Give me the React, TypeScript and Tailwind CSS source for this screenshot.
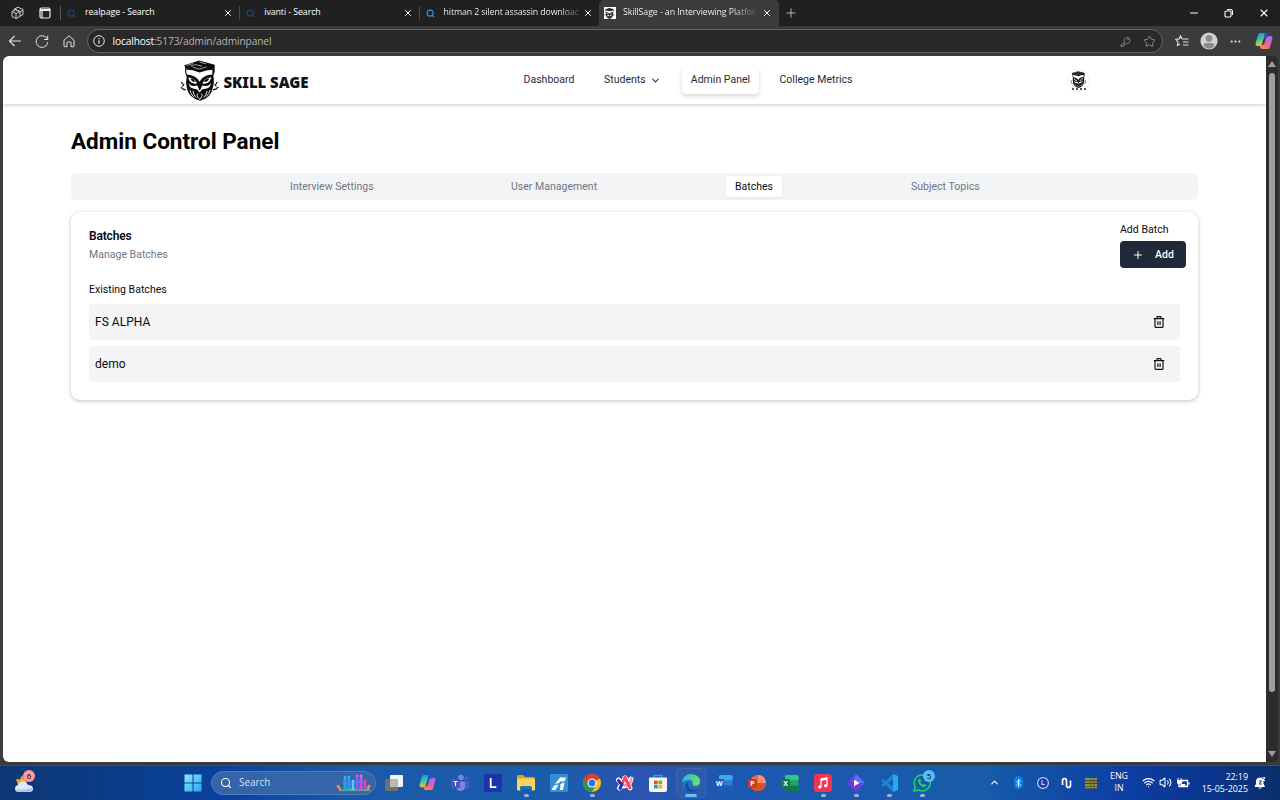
import React from "react";
import {
  ChevronDown,
  ChevronUp,
  Plus,
  Search,
  X,
  Minus,
  Star,
  Wifi,
  Volume2,
  Bluetooth,
  Ellipsis,
} from "lucide-react";

const Owl = ({ className }: { className: string }) => (
  <svg viewBox="12 10 120 122" className={className}>
    <path d="M25 25 70 11l46 13v21l-4 12q4 20-2 37-3 27-38 38-33-9-39-36-5-19-1-37-7-14-4-25Z" fill="#0b0b0b" />
    <path d="M32 26 52 20M50 31l20 6 22-7M70 15l20 6M44 28l14-5 20 5" stroke="#fff" strokeWidth="1.800" fill="none" />
    <path d="M31 38q18 0 40 9 21-7 38-8v14q-28 1-38 22Q61 56 33 53q-4-8-2-15Z" fill="#fff" />
    <path d="M37 62q18 2 26 17-6 3-9 1-14-2-17-18ZM106 61q-18 2-27 18 5 3 9 1 14-2 18-19Z" fill="#fff" />
    <path d="M43 65q10 0 15 10-11 1-15-10ZM100 65q-11 0-16 10 12 1 16-10Z" fill="#0b0b0b" />
    <path d="M38 78q5 12 20 9l6-1 7 16 8-16 5 1q15 3 21-10-1 17-17 19l-10 2-7 9-7-9-10-2Q39 94 38 78Z" fill="#fff" />
    <path d="M64 81h15l-8 17Z" fill="#0b0b0b" />
    <path d="M42 100q2 12 11 20M51 102q1 12 9 20M93 102q-1 12-9 20M102 99q-2 12-11 20M66 110l-3 7 8 11 8-11-3-7" stroke="#fff" strokeWidth="2.600" fill="none" />
    <path d="M17 75l2 7M24 81l-5 8M14 92l7 3M29 99l-10-3M123 75l-2 7M116 81l5 8M128 91l-8 4M111 99l11-3" stroke="#0b0b0b" strokeWidth="3.600" fill="none" />
  </svg>
);

const Copilot = ({ className }: { className: string }) => (
  <svg viewBox="0 0 18 18" className={className}>
    <defs>
      <linearGradient id="cpa" x1="0" y1="0" x2="0.3" y2="1">
        <stop offset="0" stopColor="#2387ea" />
        <stop offset=".5" stopColor="#35c5a3" />
        <stop offset="1" stopColor="#f5c62e" />
      </linearGradient>
      <linearGradient id="cpb" x1="0.6" y1="0" x2="0.2" y2="1">
        <stop offset="0" stopColor="#a66bf0" />
        <stop offset=".55" stopColor="#ee62a0" />
        <stop offset="1" stopColor="#ff8a45" />
      </linearGradient>
    </defs>
    <path d="M5 1h6q1.500 0 2 2l.6 2H11Q9 5 8.400 7L7 12q-.6 2-2.500 2H2.500Q0 14 .7 11L3 3Q3.600 1 5 1Z" fill="url(#cpa)" />
    <path d="M13 17H7q-1.500 0-2-2l-.5-2H7q2 0 2.600-2L11 6q.6-2 2.500-2h2q2.500 0 1.800 3L15 15q-.6 2-2 2Z" fill="url(#cpb)" />
    <path d="M9.500 1H11q1.500 0 2 2l.6 2H11Q9.800 5 9.200 5.800Z" fill="#1d4fc7" />
  </svg>
);

const Trash = () => (
  <svg viewBox="0 0 12 12" className="size-3" fill="none" stroke="#111" strokeWidth="1.200">
    <path d="M.8 2.700h10.400M4 2.500V1.300q0-.6.600-.6h2.800q.6 0 .6.600v1.200M2 2.700v7.700q0 .9.900.9h6.200q.9 0 .9-.9V2.700M4.900 5.200v3.800M7.100 5.200v3.800" />
  </svg>
);

const tabs = ["realpage - Search", "ivanti - Search", "hitman 2 silent assassin downloac"];

function TabStrip() {
  return (
    <div className="flex h-[26px] shrink-0 items-center bg-[#202020] text-white">
      <div className="flex w-[61px] shrink-0 items-center justify-between border-r border-[#5a5a5a] pr-[9px] pl-[11px]">
        <svg viewBox="0 0 14 14" className="size-[14px]" fill="none" stroke="#ccc" strokeWidth="1">
          <path d="M1 5.500 5 3.500l4 2v5l-4 2-4-2ZM1 5.500l4 2 4-2M5 7.500v5M3 4.500V3.200l4-2 5 2.300v5L9 10.300M4 3.500l5 2.300 3-2" />
        </svg>
        <svg viewBox="0 0 12 12" className="size-[12px]" fill="none" stroke="#eee" strokeWidth="1.200">
          <rect x="1" y="1" width="10" height="10" rx="1.500" />
          <path d="M1 2.500h10M1 3.500h10M3 3v8" />
        </svg>
      </div>
      {tabs.map((t, i) => (
        <div
          key={t}
          className={
            "flex w-[179.300px] shrink-0 items-center pr-[6px] pl-[6px] " + (i < 2 ? "border-r border-[#4a4a4a]" : "")
          }
        >
          <Search className={"size-[9px] shrink-0 " + (i === 2 ? "text-[#3b8de0]" : "text-[#1d4870]")} strokeWidth={3} />
          <span
            className={
              "ml-[9px] w-[136px] text-[8.800px] whitespace-nowrap " +
              (i === 2
                ? "bg-linear-to-r from-white from-85% to-[#444] bg-clip-text tracking-[-0.120px] text-transparent"
                : "tracking-[-0.080px]")
            }
          >
            {t}
          </span>
          <X className="ml-auto size-[10px] shrink-0" strokeWidth={2.400} />
        </div>
      ))}
      <div className="flex h-full w-[180px] shrink-0 items-center rounded-t-[5px] bg-[#3b3b3b] pr-[7px] pl-[5px]">
        <div className="flex size-3 items-center justify-center bg-white">
          <Owl className="size-[11px]" />
        </div>
        <span className="ml-[7px] w-[135px] bg-linear-to-r from-white from-80% to-[#555] bg-clip-text text-[8.800px] tracking-[-0.080px] whitespace-nowrap text-transparent">
          SkillSage - an Interviewing Platfor
        </span>
        <X className="ml-auto size-[10px] shrink-0" strokeWidth={2.400} />
      </div>
      <Plus className="ml-[5px] size-[14px] text-[#c8c8c8]" strokeWidth={1.500} />
      <div className="ml-auto flex w-[97px] items-center justify-between pr-[10px] pl-[5px]">
        <Minus className="size-3" strokeWidth={2} />
        <svg viewBox="0 0 10 10" className="size-[10px]" fill="none" stroke="#fff" strokeWidth="1.100">
          <rect x="1" y="3" width="6" height="6" rx="1.200" />
          <path d="M3 1.500h3.500q2 0 2 2V7" />
        </svg>
        <X className="size-3" strokeWidth={2.200} />
      </div>
    </div>
  );
}

function Toolbar() {
  return (
    <div className="flex h-[30px] shrink-0 items-center bg-[#3b3b3b] pr-[7px] pl-2 text-[#e4e4e4]">
      <svg viewBox="0 0 14 14" className="size-[14px]" fill="none" stroke="currentColor" strokeWidth="1.100">
        <path d="M13 7H1.500M6.500 2l-5 5 5 5" />
      </svg>
      <svg viewBox="0 0 14 14" className="ml-[13px] size-[14px]" fill="none" stroke="currentColor" strokeWidth="1">
        <path d="M12.600 6A5.800 5.800 0 1 0 12.800 8M12.700 1.500V5.500H9" />
      </svg>
      <svg viewBox="0 0 14 14" className="ml-[13px] size-[14px]" fill="none" stroke="currentColor" strokeWidth="1">
        <path d="M2 6.200 7 1.800l5 4.400V12q0 .7-.7.700H9V8.500Q9 8 8.500 8h-3Q5 8 5 8.500v4.200H2.700Q2 12.700 2 12Z" />
      </svg>
      <div className="ml-[11px] flex h-[24px] w-[1076px] items-center rounded-full border border-[#666] bg-[#282828] pr-[6px] pl-[5px]">
        <svg viewBox="0 0 12 12" className="size-[12px]" fill="none" stroke="currentColor">
          <circle cx="6" cy="6" r="5.300" />
          <path d="M6 5.200v3.600M6 3v1.200" strokeWidth="1.200" />
        </svg>
        <span className="ml-[7.500px] pt-px text-[10.200px] tracking-[-0.130px] text-[#b4b4b4]">
          <span className="text-white">localhost</span>:5173/admin/adminpanel
        </span>
        <svg viewBox="0 0 12 12" className="ml-auto size-[11px]" fill="none" stroke="#8a8a8a">
          <path d="M5.200 6.600a3.200 3.200 0 1 1 1.500 1.200L6 8.500H5V10H3.500v1.300H1V9.800Z" />
          <circle cx="8.800" cy="3.400" r=".6" />
        </svg>
        <Star className="ml-[12px] size-[13px] text-[#999]" strokeWidth={1.600} />
      </div>
      <svg viewBox="0 0 14 12" className="ml-[12px] h-[12px] w-[14px]" fill="none" stroke="currentColor" strokeWidth="1.100">
        <path d="M8 4 7 3.700 5.500.8 4 3.900l-3.400.5L3 6.900l-.6 3.600 2.600-1.500M8 4h5.500M8 7h5.500M8 10h5.500" />
      </svg>
      <svg viewBox="0 0 18 18" className="ml-[10.500px] size-[18px]">
        <circle cx="9" cy="9" r="8.600" fill="#d4d2d0" />
        <circle cx="9" cy="6.500" r="3.400" fill="#8d8a88" />
        <path d="M3.500 14q0-3 3-3h5q3 0 3 3-5.500 5.500-11 0Z" fill="#8d8a88" />
      </svg>
      <Ellipsis className="ml-[11px] size-[13px]" />
      <Copilot className="ml-auto size-[18px]" />
    </div>
  );
}

function BatchRow({ name }: { name: string }) {
  return (
    <div className="flex h-9 items-center justify-between rounded-[3px] bg-[#f3f4f6] pr-[15px] pl-[6px] text-[12px]">
      <span className="tracking-[0.030px]">{name}</span>
      <Trash />
    </div>
  );
}

function Site() {
  return (
    <div className="flex h-[706px] w-[1263px] flex-col overflow-hidden rounded-l-[6px] bg-white font-['Roboto',sans-serif] text-[#090b10]">
      <header className="flex h-12 shrink-0 items-center pl-[177px] shadow-[0_1px_4px_rgba(0,0,0,0.22)]">
        <Owl className="h-[41px] w-[40px]" />
        <span className="ml-[3.500px] w-[86px] pt-[4px] font-['Noto_Sans',sans-serif] text-[15px] leading-none font-black tracking-[-0.050px] whitespace-nowrap text-[#101418]">
          SKILL SAGE
        </span>
        <nav className="ml-[214px] flex items-center text-[10.500px] font-normal tracking-[0.020px] text-[#1f2937]">
          <span className="w-[80.500px]">Dashboard</span>
          <span className="flex w-[78px] items-center">
            Students
            <ChevronDown className="ml-[4px] size-[11px]" strokeWidth={2.200} />
          </span>
          <span className="flex h-[27px] w-[77px] items-center justify-center rounded-[4px] bg-white shadow-[0_2px_4px_rgba(0,0,0,0.16)]">
            Admin Panel
          </span>
          <span className="ml-[20.500px]">College Metrics</span>
        </nav>
        <div className="ml-auto mr-[176px] flex size-[23px] items-center justify-center rounded-full border border-[#eef0f0]">
          <div className="flex flex-col items-center">
            <Owl className="size-[17px]" />
            <span className="h-[2px] w-[14px] border-b-2 border-dotted border-[#555]" />
          </div>
        </div>
      </header>
      <main className="pr-[68px] pl-[68px]">
        <h1 className="mt-[22px] h-[30px] text-[22.500px] leading-[30px] font-bold text-black">Admin Control Panel</h1>
        <div className="mt-[17px] flex h-[27px] items-center rounded-[5px] bg-[#f3f4f6] text-[10.500px] tracking-[0.020px] text-[#71757e]">
          <span className="ml-[219px] w-[221px]">Interview Settings</span>
          <span className="w-[215px]">User Management</span>
          <span className="flex h-[21px] w-[56px] items-center justify-center rounded-[3px] bg-white text-[#090b10] shadow-[0_1px_2px_rgba(0,0,0,0.08)]">
            Batches
          </span>
          <span className="ml-[129px]">Subject Topics</span>
        </div>
        <section className="mt-[12px] h-[188px] rounded-[9px] bg-white pt-[11px] pr-[18px] pl-[18px] shadow-[0_1px_4px_rgba(0,0,0,0.25)]">
          <div className="-mr-[6px] flex h-[46px] justify-between">
            <div className="pt-[4px]">
              <h2 className="text-[12px] leading-[18px] font-semibold tracking-[-0.180px]">Batches</h2>
              <p className="pt-px text-[10.500px] leading-[18px] tracking-[0.020px] text-[#71757e]">Manage Batches</p>
            </div>
            <div>
              <p className="text-[10.500px] leading-[14px] tracking-[0.020px]">Add Batch</p>
              <button className="mt-[4px] flex h-[27px] w-[66px] items-center rounded-[4px] bg-[#1f2937] pl-[12px] text-[10.500px] font-medium text-white">
                <Plus className="size-3" strokeWidth={2} />
                <span className="ml-[11px]">Add</span>
              </button>
            </div>
          </div>
          <p className="mt-[14px] mb-[7px] text-[10.500px] leading-[14px] tracking-[0.020px]">Existing Batches</p>
          <div className="flex flex-col gap-[6px]">
            <BatchRow name="FS ALPHA" />
            <BatchRow name="demo" />
          </div>
        </section>
      </main>
    </div>
  );
}

function ScrollBar() {
  return (
    <div className="flex h-[706px] w-[12px] flex-col items-center rounded-r-[5px] bg-[#2c2c2c] py-[5px]">
      <svg viewBox="0 0 8 6" className="h-[6px] w-[8px]">
        <path d="M4 0 8 6H0Z" fill="#9e9e9e" />
      </svg>
      <div className="mt-[6px] h-[619px] w-[6px] rounded-full bg-[#9e9e9e]" />
      <svg viewBox="0 0 8 6" className="mt-auto h-[6px] w-[8px]">
        <path d="M4 6 8 0H0Z" fill="#9e9e9e" />
      </svg>
    </div>
  );
}

const Office = ({ letter, main, dark, light }: { letter: string; main: string; dark: string; light: string }) => (
  <svg viewBox="0 0 18 18" className="size-[18px]">
    <rect x="4" y="1" width="13.500" height="16" rx="1.500" fill={main} />
    <rect x="4" y="1" width="13.500" height="5.300" rx="1.500" fill={light} />
    <path d="M4 11.500h13.500V16q0 1-1 1H5q-1 0-1-1Z" fill={dark} />
    <rect x="0" y="5" width="9" height="9" rx="1" fill={dark} />
    <text x="4.500" y="12" textAnchor="middle" fontSize="7" fontWeight="700" fill="#fff" fontFamily="Open Sans">
      {letter}
    </text>
  </svg>
);

const apps: { node: React.ReactNode; dot?: boolean; active?: boolean }[] = [
  {
    node: (
      <svg viewBox="0 0 18 18" className="size-[18px]">
        <rect x="5" y="1" width="13" height="12" rx="1" fill="#f4f4f4" />
        <rect x="0" y="5" width="13" height="12" rx="1" fill="#707070" />
        <path d="M5 5h8v8H5Z" fill="#b9b9b9" />
      </svg>
    ),
  },
  { node: <Copilot className="size-[17px]" /> },
  {
    node: (
      <svg viewBox="0 0 18 18" className="size-[18px]">
        <circle cx="10" cy="3.500" r="2.800" fill="#7b83eb" />
        <circle cx="15.500" cy="4.500" r="1.900" fill="#5059c9" />
        <path d="M12 7.500h6v4.500q0 3-3 3h-3Z" fill="#5059c9" />
        <path d="M5 7.500h9v4.500q0 5-4.500 5T5 12Z" fill="#7b83eb" />
        <rect x="0" y="5" width="9" height="9" rx="1" fill="#4b53bc" />
        <path d="M2.500 7.500h4M4.500 7.500v4.500" stroke="#fff" strokeWidth="1.100" />
      </svg>
    ),
  },
  {
    node: (
      <svg viewBox="0 0 18 18" className="size-[18px]">
        <rect width="18" height="18" fill="#1b34ab" />
        <path d="M6.700 4v9.200h5.600" stroke="#fff" strokeWidth="1.800" fill="none" />
      </svg>
    ),
  },
  {
    dot: true,
    node: (
      <svg viewBox="0 0 18 18" className="size-[18px]">
        <path d="M0 2.500Q0 1 1.500 1H6l2 2h8.500Q18 3 18 4.500V8H0Z" fill="#e4a31b" />
        <rect y="4.500" width="18" height="12" rx="1.200" fill="#ffd35b" />
        <path d="M3 17v-3.500q0-1.500 1.500-1.500h9q1.500 0 1.500 1.500V17Z" fill="#1477c8" />
        <path d="M5.500 17v-1.500h7V17Z" fill="#0b529c" />
      </svg>
    ),
  },
  {
    node: (
      <svg viewBox="0 0 18 18" className="size-[18px]">
        <rect width="18" height="18" rx="1" fill="#338fcf" />
        <path d="M1.500 16 4 11.500l4.500-1L5.500 16ZM5 10l5-6.500h6L15 7l-4 1 .5-2L9 9ZM10.500 10l4-1.500L13 16h-3Z" fill="#fff" />
      </svg>
    ),
  },
  {
    dot: true,
    node: (
      <svg viewBox="0 0 18 18" className="size-[18px]">
        <circle cx="9" cy="9" r="9" fill="#fbc116" />
        <path d="M9 9 1.200 4.500A9 9 0 0 1 16.800 4.500Z" fill="#e33b2e" />
        <path d="M9 9 1.200 4.500A9 9 0 0 0 9 18l4-7Z" fill="#269c4b" />
        <path d="M9 5h7.900A9 9 0 0 0 1.200 4.500L5 11Z" fill="#e33b2e" />
        <circle cx="9" cy="9" r="4.500" fill="#fff" />
        <circle cx="9" cy="9" r="3.400" fill="#2a74e8" />
      </svg>
    ),
  },
  {
    node: (
      <svg viewBox="0 0 18 16" className="h-[16px] w-[18px]" strokeLinecap="round" strokeLinejoin="round" fill="none">
        <path d="M9 3 6.500 9l-4-4M6 9l-2.500 4M9 3l5 10M15 4l-2 5-5 2" stroke="#fff" strokeWidth="5" />
        <path d="M2.500 5q2 5 9 5.500M15.500 3.500Q15 9 11 10.500" stroke="#ff8b9c" strokeWidth="2.600" />
        <path d="M9 2.500 14 13" stroke="#f84561" strokeWidth="3" />
        <path d="M9 2.500 4 13.500" stroke="#f84561" strokeWidth="2.800" />
        <path d="M2.500 5.500Q4 8.500 6 9.200L4 13.300" stroke="#2032b8" strokeWidth="2.800" />
      </svg>
    ),
  },
  {
    node: (
      <svg viewBox="0 0 18 18" className="size-[18px]">
        <path d="M5 4V1.500h8V4" stroke="#28a3e5" strokeWidth="1.400" fill="none" />
        <path d="M0 3.500h18V16q0 2-2 2H2q-2 0-2-2Z" fill="#f6f6f6" />
        <path d="M5 6.500h3.700v3.700H5Z" fill="#ef5023" />
        <path d="M9.400 6.500h3.700v3.700H9.400Z" fill="#7eb900" />
        <path d="M5 10.800h3.700v3.700H5Z" fill="#10a2e7" />
        <path d="M9.400 10.800h3.700v3.700H9.400Z" fill="#fcb800" />
      </svg>
    ),
  },
  {
    active: true,
    node: (
      <svg viewBox="0 0 18 18" className="size-[18px]">
        <defs>
          <linearGradient id="edg" x1="0" y1="0" x2="1" y2="0.400">
            <stop offset="0" stopColor="#28b1ea" />
            <stop offset="1" stopColor="#69dd6b" />
          </linearGradient>
        </defs>
        <circle cx="9" cy="9" r="9" fill="#1c74cf" />
        <path d="M.1 8.500Q1 0 9 0q9 .5 9 7.800 0 4-4.500 4-3.500 0-2.700-2 .2-3.500-3.800-4Q2.500 5.500.1 8.500Z" fill="url(#edg)" />
        <path d="M6.500 8Q5 13 9 15.200q3.500 1.500 7.500-.8-3 4-8 3.500-5-1-5.500-6Q3 8.500 6.500 8Z" fill="#0d4fa3" />
        <path d="M10.500 10.500q-1.500 1.500 1.500 3 3 1 5.500-.5l-1 1.800q-3.800 1.500-7.500 0Q6 13 8 10Z" fill="#3a62ad" />
      </svg>
    ),
  },
  { node: <Office letter="W" main="#2b7cd3" dark="#185abd" light="#41a5ee" /> },
  {
    node: (
      <svg viewBox="0 0 18 18" className="size-[18px]">
        <circle cx="10" cy="9" r="8" fill="#ed6c47" />
        <path d="M10 1a8 8 0 0 1 8 8h-8Z" fill="#ff8f6b" />
        <path d="M3 13a8 8 0 0 0 15-4h-8Z" fill="#d35230" />
        <rect y="5" width="9" height="9" rx="1" fill="#c43e1c" />
        <text x="4.500" y="12" textAnchor="middle" fontSize="7" fontWeight="700" fill="#fff" fontFamily="Open Sans">
          P
        </text>
      </svg>
    ),
  },
  { node: <Office letter="X" main="#21a366" dark="#107c41" light="#33c481" /> },
  {
    dot: true,
    node: (
      <svg viewBox="0 0 18 18" className="size-[18px]">
        <rect width="18" height="18" rx="3.500" fill="#f9324d" />
        <path d="M7 13V5l6-1.300v8" stroke="#fff" strokeWidth="1.300" fill="none" />
        <path d="m7 5 6-1.300v2L7 7Z" fill="#fff" />
        <circle cx="5.800" cy="13" r="1.700" fill="#fff" />
        <circle cx="11.700" cy="11.800" r="1.700" fill="#fff" />
      </svg>
    ),
  },
  {
    dot: true,
    node: (
      <svg viewBox="0 0 18 18" className="size-[18px]">
        <path d="m9 0 9 9-9 9-9-9Z" fill="#6346ea" />
        <path d="m9 0 9 9H6Z" fill="#5870f3" />
        <path d="m0 9 9 9 4-4-7-7Z" fill="#7b35d8" />
        <path d="M7 5.800v6.400L12.500 9Z" fill="#fff" />
      </svg>
    ),
  },
  {
    dot: true,
    node: (
      <svg viewBox="0 0 18 18" className="size-[18px]">
        <path d="M13 0 18 2v14l-5 2Z" fill="#2aa7f2" />
        <path d="M13 0v5L3 13 1 11.500ZM1 6.500 3 5l10 8v5Z" fill="#1687d4" />
      </svg>
    ),
  },
  {
    dot: true,
    node: (
      <div className="relative size-[18px]">
        <svg viewBox="0 0 18 18" className="size-[18px]" fill="none" stroke="#24d366">
          <path d="m1 17 1.200-4.300A8 8 0 1 1 5.500 16Z" strokeWidth="1.500" />
          <path d="M6 5q-1.500 1.500 0 4 2.500 4 5 4 1.500 0 2-1.800l-2-1-1.200 1Q8 10.500 7 8.300l.8-1.100L7 5Z" fill="#24d366" strokeWidth=".7" />
        </svg>
        <span className="absolute -top-[4px] left-[10px] flex size-[12px] items-center justify-center rounded-full bg-[#58bdf5] text-[8px] leading-none text-black">
          5
        </span>
      </div>
    ),
  },
];

function Taskbar() {
  return (
    <div className="flex h-[35px] shrink-0 items-center border-t border-[#24508c] bg-[linear-gradient(90deg,#0c3775_0%,#0a3d88_9%,#0b41a0_18%,#1b58a8_27%,#1a5cab_42%,#2c53b0_51%,#1d58b0_57%,#175ba9_77%,#0d3ea3_88%,#0a3590_94%,#0a2f6c_100%)] pb-px text-white">
      <div className="flex w-[183.500px] items-center pl-[14px]">
        <div className="relative h-[22px] w-[22px]">
          <svg viewBox="0 0 22 22" className="size-[22px]">
            <path d="m2 7 4 .5L8 3l2 4 4 1-4 6-6-1Z" fill="#f5a623" />
            <path d="M5 20q-4 0-4-3.500 0-3 3-3.300Q6 8.500 10 9.500q3 .5 4 3.500 5 0 5 3.700 0 3.300-4 3.300Z" fill="#dce9fa" />
            <path d="M3 17q5 2 15-1 0 4-3 4H5q-3 0-2-3Z" fill="#a9c4ee" />
          </svg>
          <span className="absolute -top-[2px] left-[9px] flex size-3 items-center justify-center rounded-full bg-[#ff98a5] text-[8px] leading-none text-black">
            6
          </span>
        </div>
      </div>
      <svg viewBox="0 0 18 18" className="size-[18px]">
        <defs>
          <linearGradient id="win" x1="0" y1="0" x2="1" y2="1">
            <stop offset="0" stopColor="#8fe7ff" />
            <stop offset="1" stopColor="#23a9f1" />
          </linearGradient>
        </defs>
        <path d="M.5.500h8v8h-8ZM9.500.500h8v8h-8ZM.5 9.500h8v8h-8ZM9.500 9.500h8v8h-8Z" fill="url(#win)" />
      </svg>
      <div className="ml-[9.500px] flex h-[24px] w-[165px] items-center rounded-full border border-[#527cb9] bg-[#3465a8] pr-[3px] pl-[8px]">
        <Search className="size-[12px]" strokeWidth={2.200} />
        <span className="ml-[7px] text-[9.900px] text-[#d5e1f1]">Search</span>
        <svg viewBox="0 0 36 18" className="ml-auto h-[18px] w-[36px]" strokeLinecap="round">
          <path d="M4 16.500Q18 13 34 16.500Z" fill="#58b88a" stroke="#58b88a" />
          <path d="M9 6v9M13 5v10" stroke="#22a3e8" strokeWidth="3" />
          <path d="M17 7v8" stroke="#5ad0ee" strokeWidth="2.600" />
          <path d="M21 4v11" stroke="#9457ee" strokeWidth="3" />
          <path d="M25 4v11" stroke="#d14bec" strokeWidth="3" />
          <path d="M29 7v8" stroke="#f0419c" strokeWidth="2.600" />
          <path d="m2 12 2 3M32 15l1-3" stroke="#ee8965" strokeWidth="2.600" />
          <path d="M7 9h9M19 8h8" stroke="#5b7df1" strokeWidth="1.500" />
          <g fill="#37bdf0">
            <circle cx="9" cy="3.500" r="1.500" />
            <circle cx="13" cy="3" r="1.300" />
            <circle cx="21" cy="2" r="1.400" fill="#b965f4" />
            <circle cx="25" cy="2" r="1.400" fill="#e16af4" />
          </g>
        </svg>
      </div>
      <div className="ml-[1.500px] flex h-full items-center">
        {apps.map((a, i) => (
          <div key={i} className="relative flex h-full w-[33px] items-center justify-center">
            <div
              className={
                "flex h-[30px] w-[30px] items-center justify-center rounded-[4px] " +
                (a.active ? "border border-[#3b65ae] bg-[#2d5aaa]" : "")
              }
            >
              {a.node}
            </div>
            {a.dot && <i className="absolute bottom-[2px] left-[14px] h-[3px] w-[5px] rounded-full bg-[#9eb5d6]" />}
            {a.active && <i className="absolute bottom-[2px] left-[10.500px] h-[3px] w-[12px] rounded-full bg-[#62c0fa]" />}
          </div>
        ))}
      </div>
      <div className="ml-auto flex items-center pr-[14px]">
        <ChevronUp className="size-[11px]" strokeWidth={2.200} />
        <span className="ml-[14px] flex h-[13px] w-[9px] items-center justify-center rounded-full bg-[#0a80ed]">
          <Bluetooth className="size-[10px]" strokeWidth={2.200} />
        </span>
        <svg viewBox="0 0 12 12" className="ml-[14px] size-3" fill="none" stroke="#c3cdf8" strokeWidth="1.200">
          <circle cx="6" cy="6" r="5.400" fill="#203ba8" />
          <path d="M5 3.200v4.300h2.800" />
        </svg>
        <svg viewBox="0 0 12 12" className="ml-[12px] size-3" fill="none" stroke="#fff" strokeWidth="1.700">
          <path d="M1.500 8V4q0-2.500 2-2.500T5.500 4v4q0 2.500 2 2.500T9.500 8V3.500" />
        </svg>
        <svg viewBox="0 0 12 12" className="ml-[12px] size-3">
          <rect width="12" height="12" fill="#4b4430" />
          <path d="M0 2h12M0 8h12" stroke="#8dbb4a" strokeWidth="1.500" />
          <path d="M0 5h12M0 10.500h12" stroke="#c28348" strokeWidth="1.500" />
          <path d="M6 0v12M9 0v12" stroke="#315b35" strokeWidth=".7" />
        </svg>
        <span className="ml-[12px] w-[20px] text-center text-[8.800px] leading-[11.500px]">
          ENG
          <br />
          IN
        </span>
        <Wifi className="ml-[12.500px] size-[13px]" strokeWidth={2.200} />
        <Volume2 className="ml-[4.500px] size-[13px]" strokeWidth={2} />
        <svg viewBox="0 0 13 12" className="ml-[5px] h-[12px] w-[13px]" fill="none" stroke="#fff">
          <path d="M4 3.500h6.500v6H2V7M12 5.500v2" strokeWidth="1.300" />
          <path d="M1 1v2M4 1v2M0 3.500h5V5q0 2-2.500 2T0 5Z" fill="#fff" />
          <path d="M4 7.500h4v2H4Z" fill="#fff" />
        </svg>
        <span className="ml-[7px] w-[51px] text-right text-[8.900px] leading-[12px] tracking-[-0.010px] whitespace-nowrap">
          22:19
          <br />
          15-05-2025
        </span>
        <svg viewBox="0 0 12 12" className="ml-[6px] size-[12px]" stroke="#fff" fill="#fff">
          <path d="M1 9.500 2.500 7V4q0-3 3.500-3 2 0 3 1.300V7l1.500 2.500Z" />
          <path d="M4.500 11h3" />
          <path d="M5 4h2.500L5 7h3" stroke="#173b91" fill="none" />
          <path d="M8.500.700H11L8.800 3.500H11" fill="none" />
        </svg>
      </div>
    </div>
  );
}

export default function App() {
  return (
    <div className="flex h-[800px] w-[1280px] flex-col overflow-hidden bg-[#3b3b3b] font-['Open_Sans',sans-serif]">
      <TabStrip />
      <Toolbar />
      <div className="flex h-[709px] shrink-0 pl-[3px]">
        <Site />
        <ScrollBar />
      </div>
      <Taskbar />
    </div>
  );
}
